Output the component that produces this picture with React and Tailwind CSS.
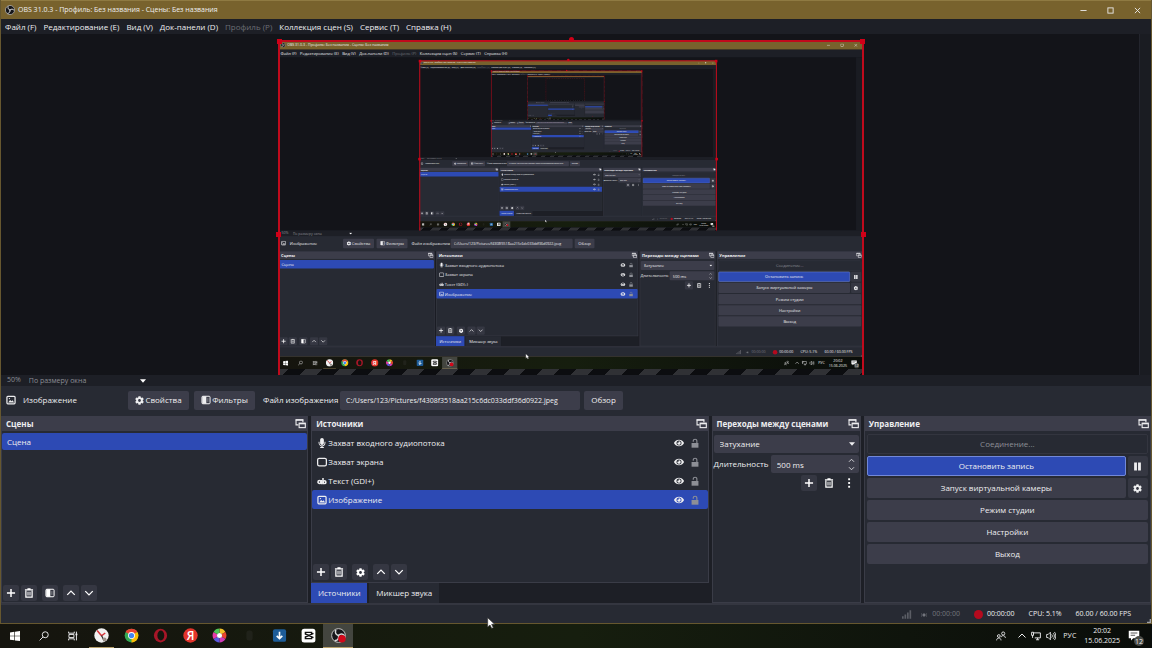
import React, { useId, useState } from 'react';
import { FaCog, FaEye, FaMicrophone } from 'react-icons/fa';
import clsx from 'clsx';

// How many times the captured screen shows itself inside the preview
const MAX_DEPTH = 4;

const MENU = [
  { label: 'Файл (F)' },
  { label: 'Редактирование (E)' },
  { label: 'Вид (V)' },
  { label: 'Док-панели (D)' },
  { label: 'Профиль (P)', disabled: true },
  { label: 'Коллекция сцен (S)' },
  { label: 'Сервис (T)' },
  { label: 'Справка (H)' },
];

const SOURCES = [
  { name: 'Захват входного аудиопотока', icon: 'mic' },
  { name: 'Захват экрана', icon: 'screen' },
  { name: 'Текст (GDI+)', icon: 'text' },
  { name: 'Изображение', icon: 'image' },
];

/* ---------- icons ---------- */

const Svg = ({ size = 'size-[10px]', box = '0 0 16 16', children, className }) => (
  <svg
    viewBox={box}
    className={clsx(size, 'shrink-0', className)}
    fill="none"
    stroke="currentColor"
    strokeWidth="2"
    aria-hidden="true"
  >
    {children}
  </svg>
);

const PlusIcon = () => (
  <Svg><path d="M8 1.5v13M1.5 8h13" strokeWidth="2.4" /></Svg>
);

const TrashIcon = () => (
  <Svg>
    <path d="M1.5 2.8h13M5.5 1.4h5" />
    <path d="M3 4v10.5h10V4" />
    <path d="M6.4 6v6M9.6 6v6" strokeWidth="1.6" />
  </Svg>
);

const UpIcon = () => (
  <Svg><path d="m2 11 6-6 6 6" /></Svg>
);

const DownIcon = () => (
  <Svg><path d="m2 5 6 6 6-6" /></Svg>
);

const DotsIcon = () => (
  <Svg>
    <g fill="currentColor" stroke="none">
      <rect x="6.7" y="0.5" width="3" height="3" />
      <rect x="6.7" y="6.5" width="3" height="3" />
      <rect x="6.7" y="12.5" width="3" height="3" />
    </g>
  </Svg>
);

const FilterIcon = () => (
  <Svg>
    <rect x="1.5" y="2" width="13" height="12" rx="1.5" strokeWidth="1.6" />
    <path d="M2 2h6.5v12H2z" fill="currentColor" stroke="none" />
    <path d="M11 5v6" strokeWidth="1.2" opacity="0.5" />
  </Svg>
);

const ImageIcon = () => (
  <Svg>
    <rect x="1.5" y="2" width="13" height="12" rx="1.5" />
    <path d="m3.5 12 3-4 2.5 2 1.5-1.5 2.5 3.5z" fill="currentColor" stroke="none" />
    <circle cx="5.5" cy="5.7" r="1.1" fill="currentColor" stroke="none" />
  </Svg>
);

const ScreenIcon = () => (
  <Svg>
    <rect x="1" y="2" width="14" height="12" rx="2.5" />
  </Svg>
);

const TextIcon = () => (
  <Svg>
    <circle cx="4" cy="9.5" r="2.4" strokeWidth="2.6" />
    <path d="M7 6.5V13M9.6 3v10" strokeWidth="2.4" />
    <circle cx="12" cy="9.8" r="2.2" strokeWidth="2.6" />
  </Svg>
);

const FloatIcon = () => (
  <Svg size="size-[11px]">
    <path d="M5 10H1.5V2.5h10V6" strokeWidth="1.6" />
    <path d="M1 3h11" strokeWidth="2" />
    <rect x="6" y="7.5" width="9" height="6.5" strokeWidth="1.6" />
    <path d="M6 8.2h9" />
  </Svg>
);

const LockIcon = () => (
  <Svg className="text-[#8d8f96]">
    <rect x="2.5" y="8" width="11" height="7.5" fill="currentColor" stroke="none" />
    <path d="M11 8V4.8a2.9 2.9 0 0 0-5.8 0V6" strokeWidth="1.8" />
  </Svg>
);

const CaretIcon = ({ className }) => (
  <svg viewBox="0 0 10 6" className={clsx('h-[4px] w-[6px]', className)} fill="currentColor" aria-hidden="true">
    <path d="M0 0h10L5 6z" />
  </svg>
);

const ObsLogo = ({ recording }) => (
  <svg viewBox="0 0 24 24" className={recording ? 'size-[15px]' : 'size-[10px]'} aria-hidden="true">
    <circle cx="12" cy="12" r="11" fill="#16161a" stroke="#c9c9c9" strokeWidth="1.5" />
    <g fill="none" stroke="#d8d8d8" strokeWidth="2.4" strokeLinecap="round">
      <path d="M12 12c-4-1-6-4-4.5-8" />
      <path d="M12 12c3-3 7-3 9 0" />
      <path d="M12 12c1 4-1 7.5-5 8" />
    </g>
    {recording && <circle cx="17.5" cy="17" r="6" fill="#d3081a" />}
  </svg>
);

const SOURCE_ICONS = {
  mic: <FaMicrophone className="size-[10px]" />,
  screen: <ScreenIcon />,
  text: <TextIcon />,
  image: <ImageIcon />,
};

/* ---------- small pieces ---------- */

const ToolButton = ({ label, children, flat }) => (
  <button
    type="button"
    aria-label={label}
    className={clsx(
      'flex h-4 w-4 items-center justify-center rounded-xs text-white',
      !flat && 'bg-[#353742]'
    )}
  >
    {children}
  </button>
);

const Dock = ({ title, children }) => (
  <section className="flex min-w-0 flex-col border-x border-b border-[#3a3c47] bg-[#272a33]">
    <header className="flex h-[15px] shrink-0 items-center justify-between bg-[#3c3d4a] pr-px pl-1">
      <h2 className="text-[8px] font-bold whitespace-nowrap">{title}</h2>
      <button type="button" aria-label={`Открепить: ${title}`}>
        <FloatIcon />
      </button>
    </header>
    {children}
  </section>
);

const WideButton = ({ children }) => (
  <button type="button" className="h-5 min-w-0 flex-1 rounded-xs bg-[#3c3d4a]">
    {children}
  </button>
);

/* ---------- window parts ---------- */

const TitleBar = () => (
  <div className="flex h-[19px] shrink-0 items-center justify-between border-t border-[#8f7a42] bg-[#78622d] pl-1">
    <div className="flex items-center gap-[3px]">
      <ObsLogo />
      <span className="text-[7px]">OBS 31.0.3 - Профиль: Без названия - Сцены: Без названия</span>
    </div>
    <div className="flex">
      <button type="button" aria-label="Свернуть" className="flex w-[27px] justify-center">
        <Svg size="size-[7px]"><path d="M1 8h14" /></Svg>
      </button>
      <button type="button" aria-label="Развернуть" className="flex w-[27px] justify-center">
        <Svg size="size-[7px]"><rect x="2" y="2" width="12" height="12" /></Svg>
      </button>
      <button type="button" aria-label="Закрыть" className="flex w-[27px] justify-center">
        <Svg size="size-[7px]"><path d="m2 2 12 12M14 2 2 14" /></Svg>
      </button>
    </div>
  </div>
);

const MenuBar = () => (
  <nav className="flex h-[15px] shrink-0 items-center gap-[7px] bg-[#1d1f26] pl-1">
    {MENU.map((item) => (
      <button
        key={item.label}
        type="button"
        disabled={item.disabled}
        className={clsx('whitespace-nowrap', item.disabled && 'text-[#6c6e75]')}
      >
        {item.label}
      </button>
    ))}
  </nav>
);

const Handle = ({ className }) => (
  <span className={clsx('absolute size-[5px] bg-[#d00018]', className)} />
);

const Preview = ({ depth }) => (
  <div className="flex min-h-0 flex-1 bg-[#131419]">
    <div className="relative flex min-w-0 flex-1 justify-center overflow-hidden pt-[6px] pl-[2px]">
      <div className="relative h-[388px] w-[586px] shrink-0">
        <div
          className="h-[336px] overflow-hidden bg-[repeating-linear-gradient(135deg,#0c0d10_0_12px,#303135_12px_24px)]"
          inert
        >
          <div className="h-[329px] overflow-hidden bg-[#131419]">
            {depth < MAX_DEPTH && (
              <div className="h-[648px] w-[1152px] origin-top-left scale-[0.508]">
                <Screen depth={depth + 1} />
              </div>
            )}
          </div>
        </div>
        {/* selection frame of the image source */}
        <div className="pointer-events-none absolute inset-0 border-2 border-[#c00a1c]">
          <Handle className="-top-[3px] -left-[3px]" />
          <Handle className="-top-[3px] -right-[3px]" />
          <Handle className="-top-[5px] left-[289px] rounded-full" />
          <Handle className="top-[190px] -left-[4px]" />
          <Handle className="top-[190px] -right-[4px]" />
        </div>
      </div>
    </div>
    <div className="w-3 shrink-0 border-l border-[#23252d] bg-[#1a1c22]" />
  </div>
);

const ZoomBar = () => (
  <div className="flex h-[11px] shrink-0 items-center gap-2 bg-[#1d1f26] pl-[6px] text-[7px] text-[#8b8d94]">
    <span>50%</span>
    <div className="relative flex items-center">
      <select aria-label="Масштаб предпросмотра" className="w-[117px] appearance-none bg-transparent leading-[10px]">
        <option>По размеру окна</option>
      </select>
      <CaretIcon className="pointer-events-none absolute right-0 text-white" />
    </div>
  </div>
);

const SourceToolbar = () => {
  const fileId = useId();
  return (
    <div className="flex h-[30px] shrink-0 items-center bg-[#272a33] pb-[2px] pl-[5px]">
      <ImageIcon />
      <span className="ml-[7px] w-[105px]">Изображение</span>
      <button type="button" className="flex h-[19px] w-[61px] items-center justify-center gap-px rounded-xs bg-[#3c3d4a]">
        <FaCog className="size-[9px]" />
        Свойства
      </button>
      <button type="button" className="ml-[5px] flex h-[19px] w-[61px] items-center justify-center gap-px rounded-xs bg-[#3c3d4a]">
        <FilterIcon />
        Фильтры
      </button>
      <label htmlFor={fileId} className="ml-2 w-[77px] whitespace-nowrap">Файл изображения</label>
      <input
        id={fileId}
        readOnly
        value="C:/Users/123/Pictures/f4308f3518aa215c6dc033ddf36d0922.jpeg"
        className="h-[19px] w-[240px] rounded-xs bg-[#3c3d4a] px-[6px] text-[7px]"
      />
      <button type="button" className="ml-1 h-[19px] w-[39px] rounded-xs bg-[#3c3d4a]">Обзор</button>
    </div>
  );
};

const ScenesDock = () => (
  <Dock title="Сцены">
    <ul className="flex-1 pt-[2px]">
      <li>
        <button type="button" className="h-[17px] w-full rounded-xs bg-[#2d4ab4] px-[5px] text-left">Сцена</button>
      </li>
    </ul>
    <div className="flex gap-[2px] px-px pb-px">
      <ToolButton label="Добавить сцену"><PlusIcon /></ToolButton>
      <ToolButton label="Удалить сцену"><TrashIcon /></ToolButton>
      <span className="w-px" />
      <ToolButton label="Фильтры сцены"><FilterIcon /></ToolButton>
      <span className="w-px" />
      <ToolButton label="Выше"><UpIcon /></ToolButton>
      <ToolButton label="Ниже"><DownIcon /></ToolButton>
    </div>
  </Dock>
);

const SourcesDock = () => {
  const [selected, setSelected] = useState('Изображение');

  return (
    <div className="flex min-w-0 flex-col bg-[#1d1f26]">
      <div className="grid flex-1">
        <Dock title="Источники">
          <ul className="flex-1 pt-[2px]">
            {SOURCES.map((source) => (
              <li
                key={source.name}
                className={clsx(
                  'flex h-[19px] items-center gap-[6px] rounded-xs pr-2 pl-[5px]',
                  selected === source.name && 'bg-[#2d4ab4]'
                )}
              >
                <button
                  type="button"
                  onClick={() => setSelected(source.name)}
                  className="flex flex-1 items-center gap-px text-left"
                >
                  {SOURCE_ICONS[source.icon]}
                  {source.name}
                </button>
                <button type="button" aria-label="Скрыть источник"><FaEye className="size-[10px]" /></button>
                <button type="button" aria-label="Заблокировать источник"><LockIcon /></button>
              </li>
            ))}
          </ul>
          <div className="flex gap-[2px] px-px pb-[2px]">
            <ToolButton label="Добавить источник"><PlusIcon /></ToolButton>
            <ToolButton label="Удалить источник"><TrashIcon /></ToolButton>
            <span className="w-px" />
            <ToolButton label="Свойства источника"><FaCog className="size-[9px]" /></ToolButton>
            <span className="w-px" />
            <ToolButton label="Выше"><UpIcon /></ToolButton>
            <ToolButton label="Ниже"><DownIcon /></ToolButton>
          </div>
        </Dock>
      </div>
      <div className="flex h-5 gap-[2px]" role="tablist">
        <button type="button" role="tab" aria-selected="true" className="w-14 bg-[#2d4ab4]">Источники</button>
        <button type="button" role="tab" aria-selected="false" className="w-[70px] bg-[#272a33]">Микшер звука</button>
      </div>
    </div>
  );
};

const TransitionsDock = () => {
  const durationId = useId();
  return (
    <Dock title="Переходы между сценами">
      <div className="flex flex-col gap-[2px] px-px pt-1">
        <div className="relative flex items-center">
          <select aria-label="Переход" className="h-[18px] w-full appearance-none rounded-xs bg-[#3c3d4a] px-[6px]">
            <option>Затухание</option>
          </select>
          <CaretIcon className="pointer-events-none absolute right-1" />
        </div>
        <div className="flex items-center justify-between gap-px">
          <label htmlFor={durationId}>Длительность</label>
          <div className="relative flex w-[88px] items-center">
            <input id={durationId} defaultValue="500 ms" className="h-[18px] w-full rounded-xs bg-[#3c3d4a] px-[6px]" />
            <div className="absolute right-1 flex flex-col gap-[3px]">
              <button type="button" aria-label="Больше" className="flex">
                <Svg size="h-[5px] w-[7px]" box="0 2 16 12"><path d="m2 11 6-6 6 6" /></Svg>
              </button>
              <button type="button" aria-label="Меньше" className="flex">
                <Svg size="h-[5px] w-[7px]" box="0 2 16 12"><path d="m2 5 6 6 6-6" /></Svg>
              </button>
            </div>
          </div>
        </div>
      </div>
      <div className="flex justify-end gap-1 pt-[2px] pr-[3px]">
        <ToolButton label="Добавить переход"><PlusIcon /></ToolButton>
        <ToolButton label="Удалить переход" flat><TrashIcon /></ToolButton>
        <ToolButton label="Меню перехода" flat><DotsIcon /></ToolButton>
      </div>
    </Dock>
  );
};

const ControlsDock = () => (
  <Dock title="Управление">
    <div className="flex flex-col gap-[2px] px-[2px] pt-[3px]">
      <button type="button" disabled className="h-5 rounded-xs border border-[#33353f] text-[#8d8f96]">
        Соединение...
      </button>
      <div className="flex gap-[2px]">
        <button type="button" className="h-5 flex-1 rounded-xs border border-[#7288d8] bg-[#2d4ab4]">
          Остановить запись
        </button>
        <button type="button" aria-label="Пауза" className="flex h-5 w-5 items-center justify-center rounded-xs bg-[#353742]">
          <Svg size="size-[9px]">
            <path d="M4.5 1v14M11.5 1v14" strokeWidth="5" />
          </Svg>
        </button>
      </div>
      <div className="flex gap-[2px]">
        <WideButton>Запуск виртуальной камеры</WideButton>
        <button type="button" aria-label="Настройки камеры" className="flex h-5 w-5 items-center justify-center rounded-xs bg-[#353742]">
          <FaCog className="size-[9px]" />
        </button>
      </div>
      <div className="flex"><WideButton>Режим студии</WideButton></div>
      <div className="flex"><WideButton>Настройки</WideButton></div>
      <div className="flex"><WideButton>Выход</WideButton></div>
    </div>
  </Dock>
);

const StatusBar = () => (
  <footer className="flex h-[20px] shrink-0 items-center justify-end border-t-2 border-[#343640] bg-[#272a33] pt-px text-[7px]">
    <svg viewBox="0 0 12 10" className="mr-2 h-[9px] w-[10px]" fill="#5b5d65" aria-hidden="true">
      <path d="M0 7h2v3H0zM3 5h2v5H3zM6 2.5h2V10H6zM9 0h2v10H9z" />
    </svg>
    <span className="flex items-center gap-1 pr-[14px] text-[#74767d]">
      <svg viewBox="0 0 10 10" className="size-2" fill="none" stroke="currentColor" aria-hidden="true">
        <circle cx="5" cy="5" r="1.5" fill="currentColor" />
        <path d="M2 2.5v5M8 2.5v5" opacity="0.5" />
      </svg>
      00:00:00
    </span>
    <span className="flex items-center gap-1 pr-[14px]">
      <span className="size-[9px] rounded-full bg-[#b40a1e]" />
      00:00:00
    </span>
    <span className="pr-[14px]">CPU: 5.1%</span>
    <span className="pr-4">60.00 / 60.00 FPS</span>
    <svg viewBox="0 0 6 6" className="size-1 self-end" fill="#a0a2a8" aria-hidden="true">
      <path d="M4 0h2v6H0V4h4z" />
    </svg>
  </footer>
);

/* ---------- desktop taskbar ---------- */

const APPS = [
  {
    name: 'Яндекс Браузер',
    open: true,
    icon: (
      <>
        <circle cx="12" cy="12" r="11.5" fill="#f1f1f1" />
        <path d="m5 4 7 8.5L18 8" fill="none" stroke="#d8343a" strokeWidth="2.4" />
        <path d="m12 12 4.5 9" stroke="#333" strokeWidth="2" />
        <circle cx="17" cy="18" r="3" fill="#9a9088" />
      </>
    ),
  },
  {
    name: 'Google Chrome',
    icon: (
      <>
        <circle cx="12" cy="12" r="11" fill="#34a853" />
        <path d="M12 12 2.5 6.5A11 11 0 0 1 21.5 6.5z" fill="#ea4335" />
        <path d="M12 12 21.5 6.5A11 11 0 0 1 12 23z" fill="#fbbc05" />
        <circle cx="12" cy="12" r="5.5" fill="#fff" />
        <circle cx="12" cy="12" r="4.2" fill="#4285f4" />
      </>
    ),
  },
  {
    name: 'Opera',
    icon: (
      <>
        <ellipse cx="12" cy="12" rx="10.5" ry="11" fill="#a81628" />
        <ellipse cx="12.5" cy="12" rx="5.5" ry="8" fill="#15160f" />
      </>
    ),
  },
  {
    name: 'Яндекс',
    icon: (
      <>
        <circle cx="12" cy="12" r="11.5" fill="#e3342c" />
        <text x="12" y="18.5" textAnchor="middle" fontSize="19" fontWeight="600" fill="#fff">Я</text>
      </>
    ),
  },
  {
    name: 'Браузер',
    icon: (
      <g fill="none" strokeWidth="7">
        <path d="M12 4.500a7.500 7.500 0 0 1 6.500 3.700" stroke="#f2c029" />
        <path d="M18.500 8.200a7.500 7.500 0 0 1 0 7.600" stroke="#e8452f" />
        <path d="M18.500 15.800a7.500 7.500 0 0 1-6.500 3.700" stroke="#d03bb8" />
        <path d="M12 19.500a7.500 7.500 0 0 1-6.500-3.700" stroke="#5b58e0" />
        <path d="M5.500 15.800a7.500 7.500 0 0 1 0-7.600" stroke="#e63aa8" />
        <path d="M5.500 8.200a7.500 7.500 0 0 1 6.500-3.700" stroke="#4fc456" />
        <circle cx="12" cy="12" r="4" fill="#fff" stroke="none" />
      </g>
    ),
  },
  {
    name: 'Приложение',
    icon: <rect x="7" y="4" width="10" height="16" rx="4" fill="#20221a" />,
  },
  {
    name: 'Загрузки',
    icon: (
      <>
        <rect x="1.5" y="2" width="21" height="20" rx="3" fill="#1d5c98" />
        <path d="M12 6v11M7.5 12.5 12 17l4.5-4.5" fill="none" stroke="#fff" strokeWidth="2.6" />
      </>
    ),
  },
  {
    name: 'CapCut',
    icon: (
      <>
        <rect x="1" y="1" width="22" height="22" rx="4" fill="#fff" />
        <path d="M20 8.5 7 14.5V17h10v-2M20 15.5 7 9.5V7h10v2" fill="none" stroke="#111" strokeWidth="2.2" />
      </>
    ),
  },
];

const Taskbar = () => (
  <div className="flex h-6 shrink-0 justify-between bg-linear-to-r from-[#15140e] via-[#161e0e] to-[#0a0d0a] text-[7px]">
    <div className="flex">
      <button type="button" aria-label="Пуск" className="flex w-[29px] items-center justify-center">
        <svg viewBox="0 0 16 16" className="size-[10px]" fill="#fff" aria-hidden="true">
          <path d="M0 2.2 7 1.2v6.3H0zM8 1l8-1v7.5H8zM0 8.5h7v6.3l-7-1zM8 8.5h8V16l-8-1z" />
        </svg>
      </button>
      <button type="button" aria-label="Поиск" className="flex w-[29px] items-center justify-center">
        <Svg>
          <circle cx="10" cy="6" r="4.8" strokeWidth="1.5" />
          <path d="M6.5 9.5 1 15" strokeWidth="1.5" />
        </Svg>
      </button>
      <button type="button" aria-label="Представление задач" className="flex w-[29px] items-center justify-center">
        <Svg>
          <path d="M1 1v2.5h9V1M1 15v-2.5h9V15M1.5 5.5h8v5h-8zM13.5 1v14" strokeWidth="1.5" />
          <path d="M12 5.5h3" strokeWidth="2.5" />
        </Svg>
      </button>
      <div className="grid w-[266px] grid-cols-9">
        {APPS.map((app) => (
          <button
            key={app.name}
            type="button"
            aria-label={app.name}
            className="flex items-center justify-center"
          >
            <span className={clsx('flex h-full items-center border-b px-[5px]', app.open ? 'border-[#b7a06a]' : 'border-transparent')}>
              <svg viewBox="0 0 24 24" className="size-[15px]" aria-hidden="true">{app.icon}</svg>
            </span>
          </button>
        ))}
        <button
          type="button"
          aria-label="OBS Studio"
          className="flex items-center justify-center border-b border-[#b7a06a] bg-[#43453f]"
        >
          <ObsLogo recording />
        </button>
      </div>
    </div>
    <div className="flex items-center pr-3">
      <Svg className="mr-3">
        <circle cx="11.5" cy="4" r="2.5" strokeWidth="1.4" />
        <circle cx="4.5" cy="8" r="2.2" strokeWidth="1.4" />
        <path d="M1 15c0-5 7-5 7 0M8 10c1-4 7-3 7 1" strokeWidth="1.4" />
      </Svg>
      <Svg size="size-2"><path d="m1 11 7-7 7 7" /></Svg>
      <Svg className="ml-[5px]">
        <path d="M4 3h11v8H6M8 14h5M10.5 11v3M1 2v5h3V2zM2.5 7v4" strokeWidth="1.5" />
      </Svg>
      <Svg className="ml-[5px]">
        <path d="M1 5.5h2.5L7 2v12l-3.5-3.5H1zM9 5.5c1.5 1.5 1.5 3.5 0 5M11.5 3.5c2.5 2.5 2.5 6.5 0 9M13.5 1.5c3 3.5 3 9.5 0 13" strokeWidth="1.4" />
      </Svg>
      <span className="ml-[7px]">РУС</span>
      <span className="ml-2 text-center leading-[10px]">
        20:02
        <br />
        15.06.2025
      </span>
      <button type="button" aria-label="Уведомления: 12" className="relative ml-2">
        <svg viewBox="0 0 16 16" className="size-[12px]" aria-hidden="true">
          <path d="M1 1h14v10H7l-3 3v-3H1z" fill="#fff" />
          <path d="M3.5 4h9M3.5 7h6" stroke="#222" />
        </svg>
        <span className="absolute -right-1 -bottom-1 flex size-[10px] items-center justify-center rounded-full bg-[#4a4c48] text-[7px] leading-none">
          12
        </span>
      </button>
    </div>
  </div>
);

function Screen({ depth }) {
  return (
    <div className="relative flex h-full min-h-0 flex-col overflow-hidden bg-[#1d1f26] font-['Open_Sans',sans-serif] text-[8px] text-[#eeeef0]">
      <main className="flex min-h-0 flex-1 flex-col border-x border-b border-[#66572f]">
        <TitleBar />
        <MenuBar />
        <Preview depth={depth} />
        <ZoomBar />
        <SourceToolbar />
        <div className="grid h-[187px] shrink-0 grid-cols-[307fr_397fr_149fr_287fr] gap-[3px]">
          <ScenesDock />
          <SourcesDock />
          <TransitionsDock />
          <ControlsDock />
        </div>
        <StatusBar />
      </main>
      <Taskbar />
      <svg viewBox="0 0 12 18" className="pointer-events-none absolute bottom-[19px] left-[487px] h-3 w-2" aria-hidden="true">
        <path d="M1 1v14l3.5-3 2.5 5 2.5-1-2.5-5h4.5z" fill="#fff" stroke="#333" />
      </svg>
    </div>
  );
}

export default function App() {
  return (
    <div className="h-screen w-full">
      <Screen depth={0} />
    </div>
  );
}
